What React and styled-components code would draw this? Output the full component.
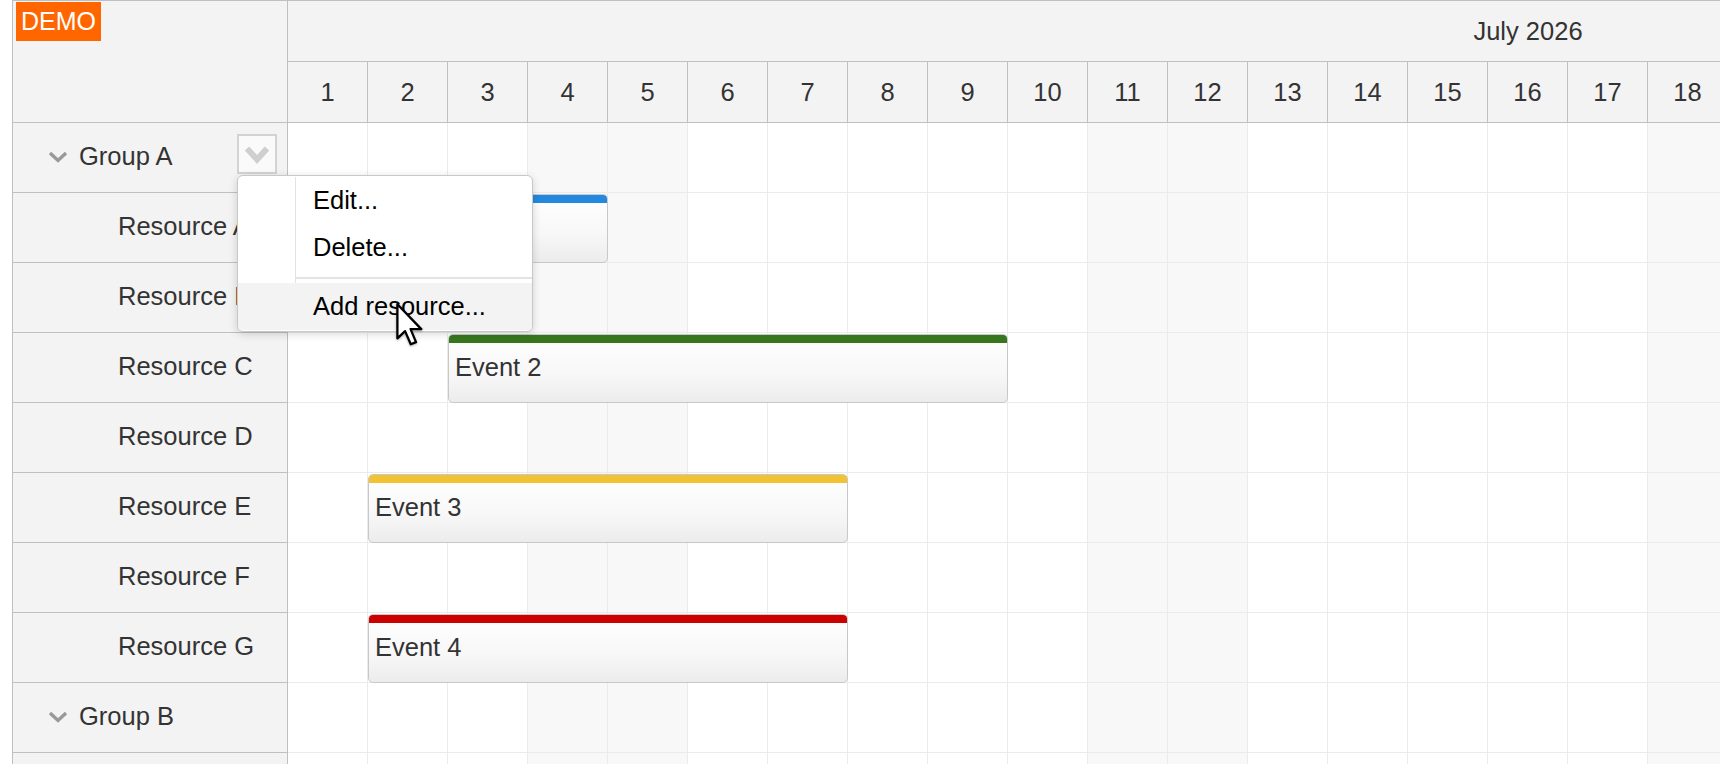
import React from 'react'
import styled, {createGlobalStyle} from 'styled-components'

const CELL_WIDTH = 80
const ROW_HEIGHT = 70
const DAYS = 31
const VISIBLE_CELLS = 19

const resources = [
  {name: 'Group A', group: true, menu: true},
  {name: 'Resource A'},
  {name: 'Resource B'},
  {name: 'Resource C'},
  {name: 'Resource D'},
  {name: 'Resource E'},
  {name: 'Resource F'},
  {name: 'Resource G'},
  {name: 'Group B', group: true},
  {name: 'Resource H'},
]

const events = [
  {text: 'Event 1', resource: 'Resource A', start: 2, end: 4, color: '#2389df'},
  {text: 'Event 2', resource: 'Resource C', start: 3, end: 9, color: '#38761d'},
  {text: 'Event 3', resource: 'Resource E', start: 2, end: 7, color: '#f1c232'},
  {text: 'Event 4', resource: 'Resource G', start: 2, end: 7, color: '#cc0000'},
]

// July 1st 2026 is a Wednesday
const isWeekend = day => {
  const dow = (3 + day - 1) % 7
  return dow === 0 || dow === 6
}

export default function App() {
  const days = Array.from({length: DAYS}, (_, i) => i + 1)
  const cells = days.slice(0, VISIBLE_CELLS)

  return (
    <Page>
      <GlobalStyle/>
      <Scheduler>
        <Corner>
          <DemoLabel>DEMO</DemoLabel>
        </Corner>

        <TimeHeader>
          <MonthRow>
            <MonthCell>July 2026</MonthCell>
          </MonthRow>
          <DayRow>
            {days.map(d => <DayCell key={d}>{d}</DayCell>)}
          </DayRow>
        </TimeHeader>

        <RowHeaders>
          {resources.map(r => (
            <RowHeader key={r.name} $group={r.group}>
              {r.group && (
                <Expander viewBox="0 0 20 12">
                  <polyline points="2,2 10,9.5 18,2"/>
                </Expander>
              )}
              <span>{r.name}</span>
              {r.menu && (
                <MenuButton>
                  <svg width="26" height="19" viewBox="0 0 26 19">
                    <polyline points="3,3.5 13,14.5 23,3.5" fill="none" stroke="#cfcfcf" strokeWidth="6"/>
                  </svg>
                </MenuButton>
              )}
            </RowHeader>
          ))}
        </RowHeaders>

        <Grid>
          {resources.map(r => (
            <GridRow key={r.name}>
              {cells.map(d => <Cell key={d} $weekend={isWeekend(d)}/>)}
              {events.filter(e => e.resource === r.name).map(e => (
                <Event
                  key={e.text}
                  $color={e.color}
                  style={{
                    left: (e.start - 1) * CELL_WIDTH,
                    width: (e.end - e.start + 1) * CELL_WIDTH,
                  }}>
                  {e.text}
                </Event>
              ))}
            </GridRow>
          ))}
        </Grid>
      </Scheduler>

      <ContextMenu>
        <MenuItem>
          <MenuIcon/>
          <MenuLabel>Edit...</MenuLabel>
        </MenuItem>
        <MenuItem>
          <MenuIcon/>
          <MenuLabel>Delete...</MenuLabel>
        </MenuItem>
        <MenuSeparator>
          <MenuIcon/>
          <SeparatorLine/>
        </MenuSeparator>
        <MenuItem $hover>
          <MenuIcon $hover/>
          <MenuLabel>Add resource...</MenuLabel>
        </MenuItem>
      </ContextMenu>

      <Cursor width="30" height="46" viewBox="0 0 13.5 21">
        <path
          d="M1 1 L1 16.6 L4.5 13.3 L7.1 19.3 L9.5 18.3 L7 12.4 L11.9 12.4 Z"
          fill="#fff"
          stroke="#000"
          strokeWidth="1.05"
          strokeLinejoin="round"/>
      </Cursor>
    </Page>
  )
}

const GlobalStyle = createGlobalStyle`
  html, body {
    margin: 0;
    padding: 0;
    overflow: hidden;
    background: #ffffff;
  }
  body {
    font-family: "Liberation Sans", Arial, sans-serif;
  }
`

const Page = styled.div`
  position: relative;
  width: 100vw;
  height: 100vh;
  overflow: hidden;
`

const Scheduler = styled.div`
  display: grid;
  grid-template-columns: 275px minmax(0, 1fr);
  grid-template-rows: 122px auto;
  margin-left: 12px;
  height: 100vh;
  border-left: 1px solid #c0c0c0;
  border-top: 1px solid #c0c0c0;
  box-sizing: border-box;
  overflow: hidden;
  color: #333;
  font-size: 25.5px;
`

const Corner = styled.div`
  position: relative;
  background: #f3f3f3;
  border-right: 1px solid #c0c0c0;
  border-bottom: 1px solid #c0c0c0;
  box-sizing: border-box;
`

const DemoLabel = styled.div`
  position: absolute;
  left: 3px;
  top: 1px;
  height: 39px;
  padding: 0 5px;
  line-height: 39px;
  background: #ff6600;
  color: #ffffff;
  font-size: 25px;
`

const TimeHeader = styled.div`
  display: flex;
  flex-direction: column;
  overflow: hidden;
  background: #f3f3f3;
`

const MonthRow = styled.div`
  display: flex;
  height: 61px;
  border-bottom: 1px solid #c0c0c0;
  box-sizing: border-box;
`

const MonthCell = styled.div`
  flex: 0 0 ${DAYS * CELL_WIDTH}px;
  display: flex;
  align-items: center;
  justify-content: center;
`

const DayRow = styled.div`
  display: flex;
  height: 61px;
  border-bottom: 1px solid #c0c0c0;
  box-sizing: border-box;
`

const DayCell = styled.div`
  flex: 0 0 ${CELL_WIDTH}px;
  display: flex;
  align-items: center;
  justify-content: center;
  border-right: 1px solid #c0c0c0;
  box-sizing: border-box;
`

const RowHeaders = styled.div`
  display: flex;
  flex-direction: column;
  background: #f3f3f3;
  border-right: 1px solid #c0c0c0;
`

const RowHeader = styled.div`
  position: relative;
  flex: 0 0 ${ROW_HEIGHT}px;
  display: flex;
  align-items: center;
  padding-left: ${p => p.$group ? '35px' : '105px'};
  padding-bottom: 2px;
  border-bottom: 1px solid #c0c0c0;
  box-sizing: border-box;
  white-space: nowrap;
`

const Expander = styled.svg`
  width: 20px;
  height: 12px;
  margin-right: 11px;
  fill: none;
  stroke: #999;
  stroke-width: 3.4;
`

const MenuButton = styled.div`
  position: absolute;
  right: 10px;
  top: 11px;
  width: 40px;
  height: 40px;
  display: flex;
  align-items: center;
  justify-content: center;
  background: #fafafa;
  border: 2px solid #d3d3d3;
  box-sizing: border-box;
`

const Grid = styled.div`
  display: flex;
  flex-direction: column;
  overflow: hidden;
`

const GridRow = styled.div`
  position: relative;
  flex: 0 0 ${ROW_HEIGHT}px;
  display: flex;
`

const Cell = styled.div`
  flex: 0 0 ${CELL_WIDTH}px;
  background: ${p => p.$weekend ? '#f8f8f8' : '#ffffff'};
  border-right: 1px solid #ebebeb;
  border-bottom: 1px solid #ebebeb;
  box-sizing: border-box;
`

const Event = styled.div`
  position: absolute;
  top: 1px;
  height: 69px;
  display: flex;
  align-items: center;
  padding-left: 6px;
  padding-bottom: 2px;
  background: linear-gradient(to bottom, #ffffff 0%, #f7f7f7 60%, #ececec 100%);
  border: 1px solid #c8c8c8;
  border-radius: 5px;
  box-sizing: border-box;
  color: #333;
  white-space: nowrap;
  overflow: hidden;

  &::before {
    content: '';
    position: absolute;
    left: 0;
    right: 0;
    top: 0;
    height: 8px;
    background: ${p => p.$color};
  }
`

const ContextMenu = styled.div`
  position: absolute;
  left: 237px;
  top: 175px;
  width: 296px;
  padding: 1px 0;
  background: #ffffff;
  border: 1px solid #c8c8c8;
  border-radius: 6px;
  box-shadow: 0 2px 8px rgba(0, 0, 0, 0.16);
  box-sizing: border-box;
  overflow: hidden;
  font-size: 25.5px;
  color: #000;
`

const MenuItem = styled.div`
  display: flex;
  height: 47px;
  background: ${p => p.$hover ? '#f3f3f3' : 'transparent'};
`

const MenuIcon = styled.div`
  flex: 0 0 58px;
  border-right: 1px solid ${p => p.$hover ? 'transparent' : '#e3e3e3'};
  box-sizing: border-box;
`

const MenuLabel = styled.div`
  display: flex;
  align-items: center;
  padding-left: 17px;
  white-space: nowrap;
`

const MenuSeparator = styled.div`
  display: flex;
  height: 12px;
`

const SeparatorLine = styled.div`
  flex: 1;
  height: 2px;
  margin-top: 6px;
  background: #e3e3e3;
`

const Cursor = styled.svg`
  position: absolute;
  left: 395px;
  top: 302px;
  filter: drop-shadow(0 1px 1px rgba(0, 0, 0, 0.3));
`
